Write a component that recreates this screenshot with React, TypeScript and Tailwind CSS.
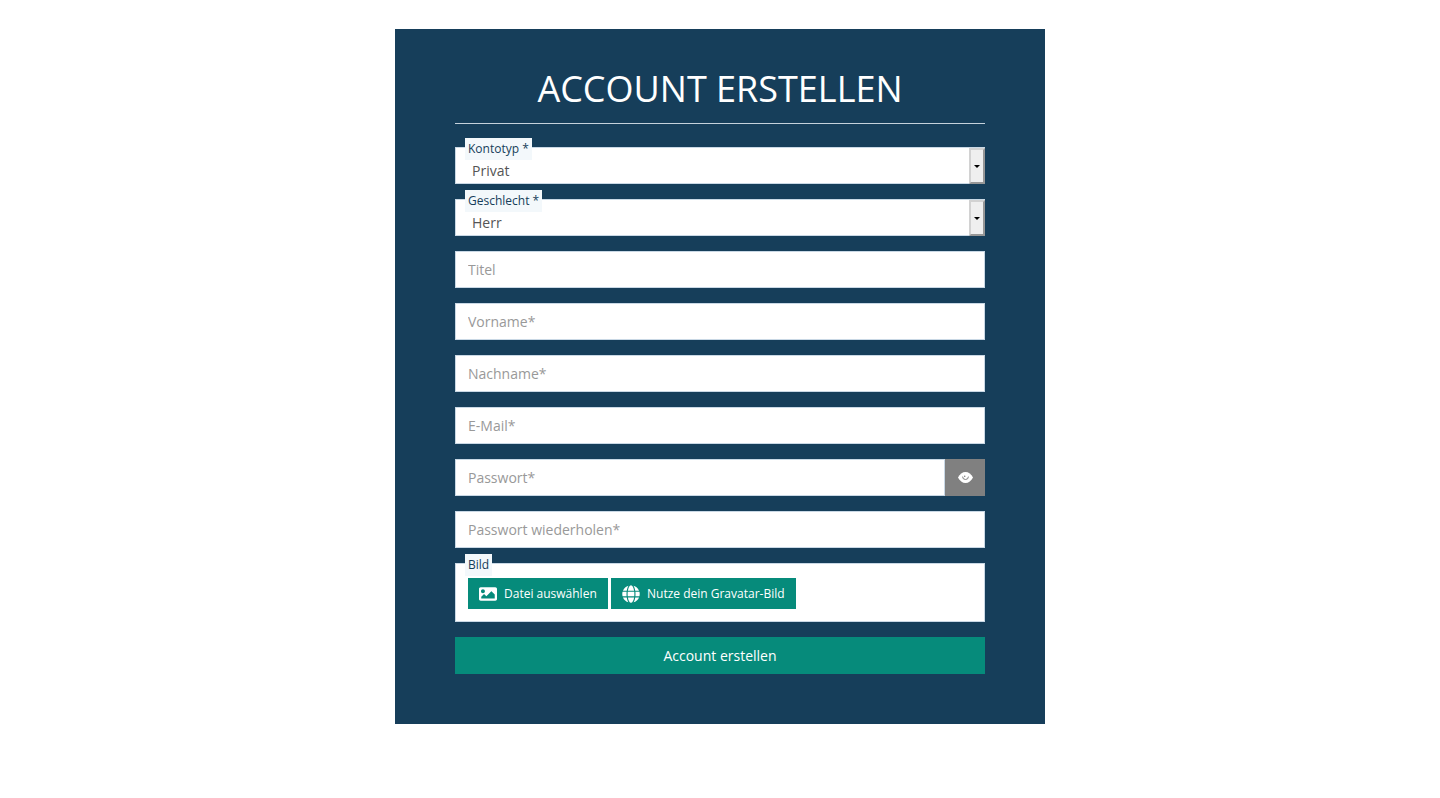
import { FaGlobe, FaImage } from "react-icons/fa";

const inputCls = "block h-[37px] w-full border border-[#c9d8e5] bg-white px-3 text-[14px] text-[#555] outline-none placeholder:text-[#999]";

function FloatLabel({ children }: { children: string }) {
  return <span className="absolute left-[9px] top-[-10px] h-[22px] bg-[#f3f8fb] px-[3px] text-[12px] leading-[22px] text-[#163e5a]">{children}</span>;
}

function SelectField({ label, value }: { label: string; value: string }) {
  return (
    <div className="relative flex h-[37px] items-stretch border border-[#c9d8e5] bg-white">
      <FloatLabel>{label}</FloatLabel>
      <span className="flex-1 pl-4 pt-[13px] text-[14px] leading-[19px] text-[#555]">{value}</span>
      <span className="-mb-px -mr-px flex w-4 items-center justify-center border-2 border-[#d2d2d2] border-b-[#979797] border-r-[#979797] bg-[#efefef]">
        <span className="h-0 w-0 border-x-[3px] border-t-[3px] border-x-transparent border-t-black" />
      </span>
    </div>
  );
}

function TextField({ placeholder }: { placeholder: string }) {
  return <input className={inputCls} placeholder={placeholder} />;
}

function EyeIcon() {
  return (
    <svg width="15" height="11" viewBox="0 0 15 11" className="-mt-px">
      <path fill="#fff" d="M0 5.5C1.7 2 4.5 0 7.5 0s5.8 2 7.5 5.5C13.3 9 10.5 11 7.5 11S1.7 9 0 5.5Z" />
      <path fill="none" stroke="#808080" strokeWidth="1" d="M4.6 4.6a2.9 2.9 0 0 0 5.8 0" />
      <circle cx="6.7" cy="4.2" r="0.8" fill="#808080" />
    </svg>
  );
}

export default function App() {
  return (
    <div className="h-[798px] bg-white pt-[29px] font-['Open_Sans',sans-serif]">
      <div className="mx-auto h-[695px] w-[650px] bg-[#163e5a] px-[60px] pt-[36px]">
        <h1 className="text-center text-[36px] leading-[48px] text-white">ACCOUNT ERSTELLEN</h1>
        <div className="mt-[10px] h-px bg-[#c5d2dc]" />
        <form className="mt-[23px] flex flex-col gap-[15px]">
          <SelectField label="Kontotyp *" value="Privat" />
          <SelectField label="Geschlecht *" value="Herr" />
          <TextField placeholder="Titel" />
          <TextField placeholder="Vorname*" />
          <TextField placeholder="Nachname*" />
          <TextField placeholder="E-Mail*" />
          <div className="flex">
            <input className={inputCls} placeholder="Passwort*" />
            <button type="button" className="flex h-[37px] w-10 shrink-0 items-center justify-center bg-[#808080]">
              <EyeIcon />
            </button>
          </div>
          <TextField placeholder="Passwort wiederholen*" />
          <div className="relative h-[59px] border border-[#c9d8e5] bg-white pl-3 pt-[14px]">
            <FloatLabel>Bild</FloatLabel>
            <div className="flex gap-[3px]">
              <button type="button" className="flex h-[31px] w-[140px] items-center gap-[7px] bg-[#068b7b] pl-[11px] text-[12px] text-white">
                <FaImage size={18} />
                Datei auswählen
              </button>
              <button type="button" className="flex h-[31px] w-[185px] items-center gap-[7px] bg-[#068b7b] pl-[11px] text-[12px] text-white">
                <FaGlobe size={18} />
                Nutze dein Gravatar-Bild
              </button>
            </div>
          </div>
          <button type="button" className="h-[37px] bg-[#068b7b] text-[14px] text-white">Account erstellen</button>
        </form>
      </div>
    </div>
  );
}
